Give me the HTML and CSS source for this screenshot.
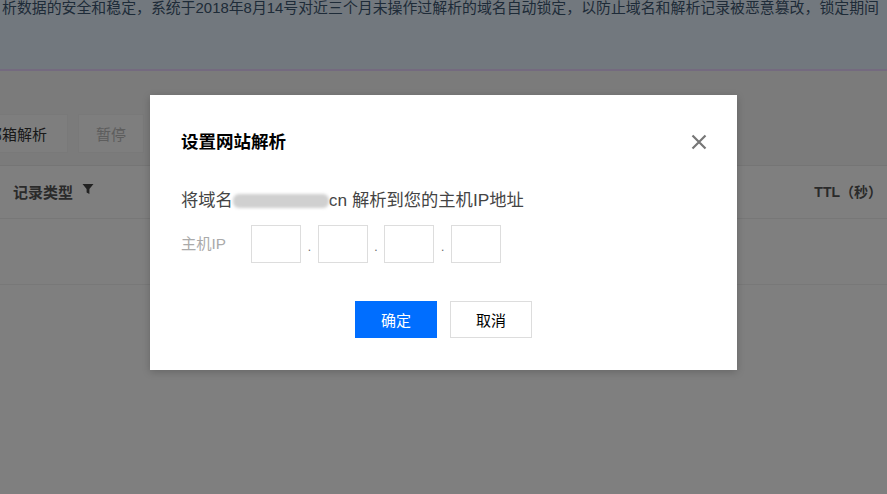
FILE: index.html
```html
<!DOCTYPE html>
<html lang="zh-CN">
<head>
<meta charset="utf-8">
<title>设置网站解析</title>
<link rel="stylesheet" href="styles.css">
</head>
<body>
<div class="page">
  <div class="notice">
    <p class="notice-text">析数据的安全和稳定，系统于2018年8月14号对近三个月未操作过解析的域名自动锁定，以防止域名和解析记录被恶意篡改，锁定期间</p>
  </div>
  <div class="toolbar">
    <button class="tool-btn" type="button">邮箱解析</button>
    <button class="tool-btn muted" type="button">暂停</button>
  </div>
  <div class="table-head">
    <span class="th">记录类型
      <svg class="filter" viewBox="0 0 12 12" aria-hidden="true"><path d="M0.5 1h11L7.4 6v5L4.6 9.5V6z"/></svg>
    </span>
    <span class="th th-ttl">TTL（秒）</span>
  </div>
  <div class="table-row"></div>
</div>
<div class="overlay">
  <div class="modal">
    <div class="modal-head">
      <h2 class="modal-title">设置网站解析</h2>
      <svg class="close" viewBox="0 0 16 16" aria-hidden="true"><path d="M1.5 1.5l13 13M14.5 1.5l-13 13"/></svg>
    </div>
    <p class="desc">将域名<span class="blur"></span>cn 解析到您的主机IP地址</p>
    <div class="ip-row">
      <span class="ip-label">主机IP</span>
      <div class="ip-inputs">
        <span class="ip-box"></span><span class="dot">.</span>
        <span class="ip-box"></span><span class="dot">.</span>
        <span class="ip-box"></span><span class="dot">.</span>
        <span class="ip-box"></span>
      </div>
    </div>
    <div class="actions">
      <button class="btn primary" type="button">确定</button>
      <button class="btn" type="button">取消</button>
    </div>
  </div>
</div>
</body>
</html>
```
FILE: styles.css
```css
* { box-sizing: border-box; }
html, body { margin: 0; height: 100%; overflow: hidden; }
body {
  width: 887px;
  height: 494px;
  font-family: "Liberation Sans", "Noto Sans CJK SC", sans-serif;
  background: #fff;
}
.page { height: 494px; background: #fff; }
.notice {
  height: 71px;
  background: #e4f0fc;
  border-bottom: 2px solid #e8d4ff;
  overflow: hidden;
}
.notice-text {
  margin: -2px 0 0 2px;
  font-size: 14.9px;
  line-height: 20px;
  color: #3d5670;
  white-space: nowrap;
}
.toolbar {
  height: 95px;
  display: flex;
  align-items: flex-end;
  gap: 10px;
  padding-bottom: 12px;
  margin-left: -34px;
  border-bottom: 1px solid #eaeaea;
  background: #f6f6f6;
}
.tool-btn {
  height: 39px;
  padding: 0 20px;
  font: 15px "Liberation Sans", "Noto Sans CJK SC", sans-serif;
  color: #333;
  background: #fcfcfc;
  border: 1px solid #f2f2f2;
}
.tool-btn.muted { color: #bbb; padding: 0 17px; }
.table-head {
  height: 53px;
  display: flex;
  justify-content: space-between;
  align-items: center;
  padding: 0 5px 0 13px;
  background: #fff;
  border-bottom: 1px solid #eee;
}
.th { font-size: 15px; font-weight: 700; color: #555; display: flex; align-items: center; gap: 9px; margin-top: -2px; }
.th-ttl { font-size: 14px; }
.filter { width: 12px; height: 12px; fill: #444; margin-top: -4px; }
.table-row { height: 66px; border-bottom: 1px solid #f0f0f0; }
.overlay {
  position: absolute;
  inset: 0;
  background: rgba(0, 0, 0, 0.5);
  display: flex;
  justify-content: center;
  padding-top: 95px;
}
.modal {
  width: 587px;
  height: 275px;
  background: #fff;
  padding: 0 29px 0 31px;
  box-shadow: 0 2px 8px rgba(0, 0, 0, 0.2);
}
.modal-head {
  height: 83px;
  display: flex;
  justify-content: space-between;
  align-items: center;
  padding-top: 11px;
}
.modal-title { margin: 0; font-size: 17.5px; line-height: 24px; font-weight: 700; color: #000; }
.close { width: 16px; height: 16px; fill: none; stroke: #777; stroke-width: 2.2; margin-right: 1px; }
.desc { margin: 0; height: 47px; font-size: 17.3px; line-height: 44px; color: #444; display: flex; white-space: pre; }
.blur {
  width: 96px;
  height: 14px;
  margin-top: 16px;
  background: #d0d0d0;
  border-radius: 6px;
  filter: blur(1.5px);
}
.ip-row { display: flex; align-items: center; height: 38px; margin-top: 3px; }
.ip-label { width: 70px; font-size: 15.3px; color: #aaa; margin-top: -10px; }
.ip-inputs { display: flex; }
.ip-box { width: 50px; height: 38px; border: 1px solid #ddd; background: #fff; }
.dot { width: 16.67px; text-align: center; font-size: 12px; line-height: 44px; color: #666; }
.actions { display: flex; justify-content: center; gap: 13px; margin-top: 35px; padding-right: 2px; }
.btn {
  width: 82px;
  height: 37px;
  font: 15px "Liberation Sans", "Noto Sans CJK SC", sans-serif;
  color: #000;
  background: #fff;
  border: 1px solid #ddd;
}
.btn.primary { background: #006eff; border-color: #006eff; color: #fff; }
```
